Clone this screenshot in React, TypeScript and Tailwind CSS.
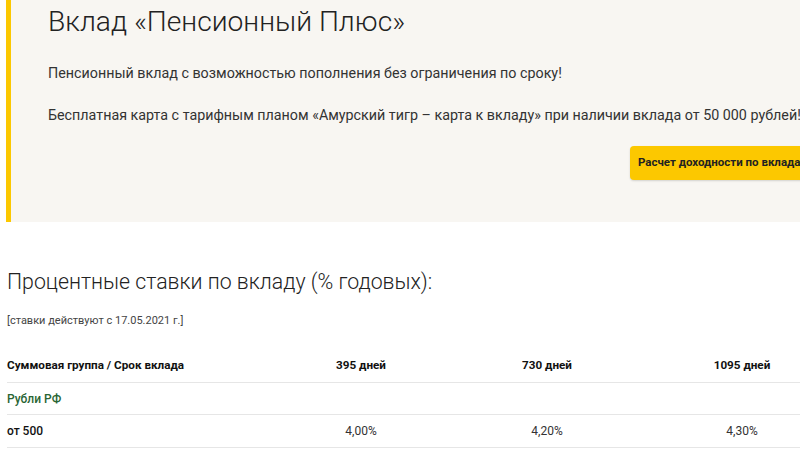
import React from "react";

export default function App() {
  const font = { fontFamily: "Roboto, 'Noto Sans', sans-serif" };
  return (
    <div className="w-[800px] h-[450px] overflow-hidden bg-white text-[#333]" style={font}>
      <div className="flex h-[222px] pl-[6px]">
        <div className="w-[5px] shrink-0 bg-[#fcc800]" />
        <div className="flex-1 min-w-0 overflow-hidden bg-[#f8f6f2] pl-[37px] pt-[2px]">
          <h1 className="text-[28.2px] font-light leading-[40px] text-[#222] whitespace-nowrap">Вклад «Пенсионный Плюс»</h1>
          <p className="mt-[21px] text-[14.3px] leading-[20px] whitespace-nowrap">
            Пенсионный вклад с возможностью пополнения без ограничения по сроку!
          </p>
          <p className="mt-[22px] text-[14.3px] leading-[20px] whitespace-nowrap">
            Бесплатная карта с тарифным планом «Амурский тигр – карта к вкладу» при наличии вклада от 50 000 рублей!
          </p>
          <div className="flex mt-[21px] ml-[582px]">
            <button className="shrink-0 h-[34px] px-[8px] rounded-[4px] bg-[#fcc800] shadow-[0_1px_2px_rgba(0,0,0,0.15)] text-[11.5px] font-bold text-[#222] whitespace-nowrap">
              Расчет доходности по вкладам
            </button>
          </div>
        </div>
      </div>
      <div className="pl-[7px]">
        <h2 className="mt-[44px] text-[21.3px] font-light leading-[32px] text-[#222] whitespace-nowrap">
          Процентные ставки по вкладу (% годовых):
        </h2>
        <div className="mt-[15px] text-[11px] leading-[16px] text-[#444] whitespace-nowrap">[ставки действуют с 17.05.2021 г.]</div>
        <div className="mt-[20px] w-[850px] text-[12px]">
          <div className="grid grid-cols-[261px_186px_186px_217px] h-[34px] items-center font-bold text-[11.7px] text-[#111] border-b border-[#e6e6e6]">
            <div>Суммовая группа / Срок вклада</div>
            <div className="text-center">395 дней</div>
            <div className="text-center">730 дней</div>
            <div className="text-center pr-[13px]">1095 дней</div>
          </div>
          <div className="h-[32px] flex items-center font-medium text-[#2a6534] border-b border-[#e6e6e6]">Рубли РФ</div>
          <div className="grid grid-cols-[261px_186px_186px_217px] h-[33px] items-center border-b border-[#e6e6e6]">
            <div className="font-medium text-[#111]">от 500</div>
            <div className="text-center">4,00%</div>
            <div className="text-center">4,20%</div>
            <div className="text-center pr-[13px]">4,30%</div>
          </div>
        </div>
      </div>
    </div>
  );
}
